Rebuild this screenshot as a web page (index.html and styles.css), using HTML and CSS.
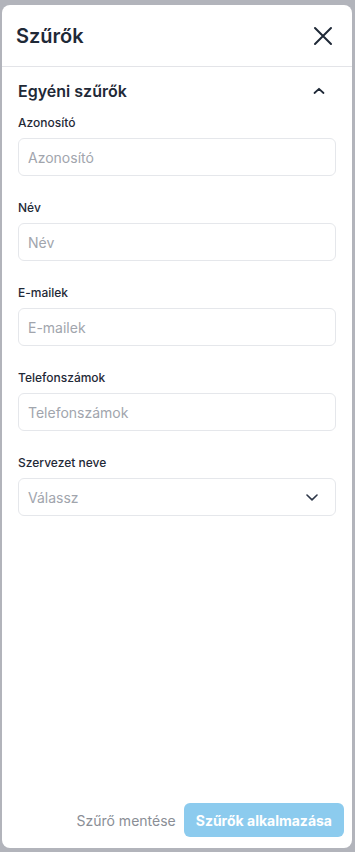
FILE: index.html
```html
<!DOCTYPE html>
<html lang="hu">
<head>
  <meta charset="UTF-8">
  <meta name="viewport" content="width=device-width, initial-scale=1.0">
  <title>Szűrők</title>
  <link rel="stylesheet" href="styles.css">
</head>
<body>
  <div class="drawer">
    <div class="drawer-head">
      <h1>Szűrők</h1>
      <button class="icon-btn close" aria-label="Bezárás">
        <svg width="20" height="20" viewBox="0 0 20 20" fill="none" stroke="#1f2937" stroke-width="2" stroke-linecap="round">
          <path d="M2 2 L18 18 M18 2 L2 18"/>
        </svg>
      </button>
    </div>

    <div class="drawer-body">
      <div class="section-head">
        <h2>Egyéni szűrők</h2>
        <svg class="chev-up" width="12" height="8" viewBox="0 0 12 8" fill="none" stroke="#1f2937" stroke-width="1.8" stroke-linecap="round" stroke-linejoin="round">
          <path d="M1.5 6 L6 1.8 L10.5 6"/>
        </svg>
      </div>

      <div class="field">
        <label>Azonosító</label>
        <input type="text" placeholder="Azonosító">
      </div>
      <div class="field">
        <label>Név</label>
        <input type="text" placeholder="Név">
      </div>
      <div class="field">
        <label>E-mailek</label>
        <input type="text" placeholder="E-mailek">
      </div>
      <div class="field">
        <label>Telefonszámok</label>
        <input type="text" placeholder="Telefonszámok">
      </div>
      <div class="field">
        <label>Szervezet neve</label>
        <div class="select">
          <span>Válassz</span>
          <svg width="12" height="7" viewBox="0 0 12 7" fill="none" stroke="#2d3748" stroke-width="1.6" stroke-linecap="round" stroke-linejoin="round">
            <path d="M1 1 L6 5.8 L11 1"/>
          </svg>
        </div>
      </div>
    </div>

    <div class="drawer-foot">
      <button class="link-btn">Szűrő mentése</button>
      <button class="primary-btn" disabled>Szűrők alkalmazása</button>
    </div>
  </div>
</body>
</html>
```

FILE: styles.css
```css
* {
  box-sizing: border-box;
}

body {
  margin: 0;
  background: #b2b4bb;
  font-family: Inter, "Noto Sans", sans-serif;
  color: #1f2937;
}

.drawer {
  margin: 5px 3px 0 2px;
  height: 843px;
  background: #fff;
  border-radius: 8px;
  display: flex;
  flex-direction: column;
}

.drawer-head {
  height: 62px;
  display: flex;
  align-items: center;
  justify-content: space-between;
  padding: 0 19px 0 14px;
  border-bottom: 1px solid #e3e4e8;
}

.drawer-head h1 {
  margin: 0;
  font-size: 20px;
  font-weight: 600;
  color: #1f2937;
}

.icon-btn {
  background: none;
  border: none;
  padding: 0;
  display: flex;
  cursor: pointer;
}

.drawer-body {
  flex: 1;
  padding: 12px 16px 0 16px;
}

.section-head {
  display: flex;
  align-items: center;
  justify-content: space-between;
  height: 24px;
  padding-right: 11px;
  margin-bottom: 12px;
}

.section-head h2 {
  margin: 0;
  font-size: 16px;
  font-weight: 600;
  color: #1f2937;
}

.field {
  margin-bottom: 24px;
}

.field label {
  display: block;
  font-size: 12px;
  line-height: 16px;
  font-weight: 500;
  color: #1f2937;
  margin-bottom: 7px;
}

.field input,
.select {
  width: 100%;
  height: 38px;
  border: 1px solid #e5e7eb;
  border-radius: 6px;
  padding: 0 9px;
  font-family: inherit;
  font-size: 14px;
  color: #1f2937;
  outline: none;
}

.field input::placeholder {
  color: #a1a5ad;
}

.select {
  display: flex;
  align-items: center;
  justify-content: space-between;
  padding-right: 17px;
  color: #a1a5ad;
}

.drawer-foot {
  display: flex;
  justify-content: flex-end;
  align-items: center;
  gap: 8px;
  padding: 0 8px 11px 0;
}

.link-btn {
  background: none;
  border: none;
  padding: 0;
  font-family: inherit;
  font-size: 14px;
  color: #8a8e96;
}

.primary-btn {
  height: 34px;
  padding: 0 12px;
  border: none;
  border-radius: 6px;
  background: #8ccbee;
  color: #fff;
  font-family: inherit;
  font-size: 14px;
  font-weight: 700;
}
```
